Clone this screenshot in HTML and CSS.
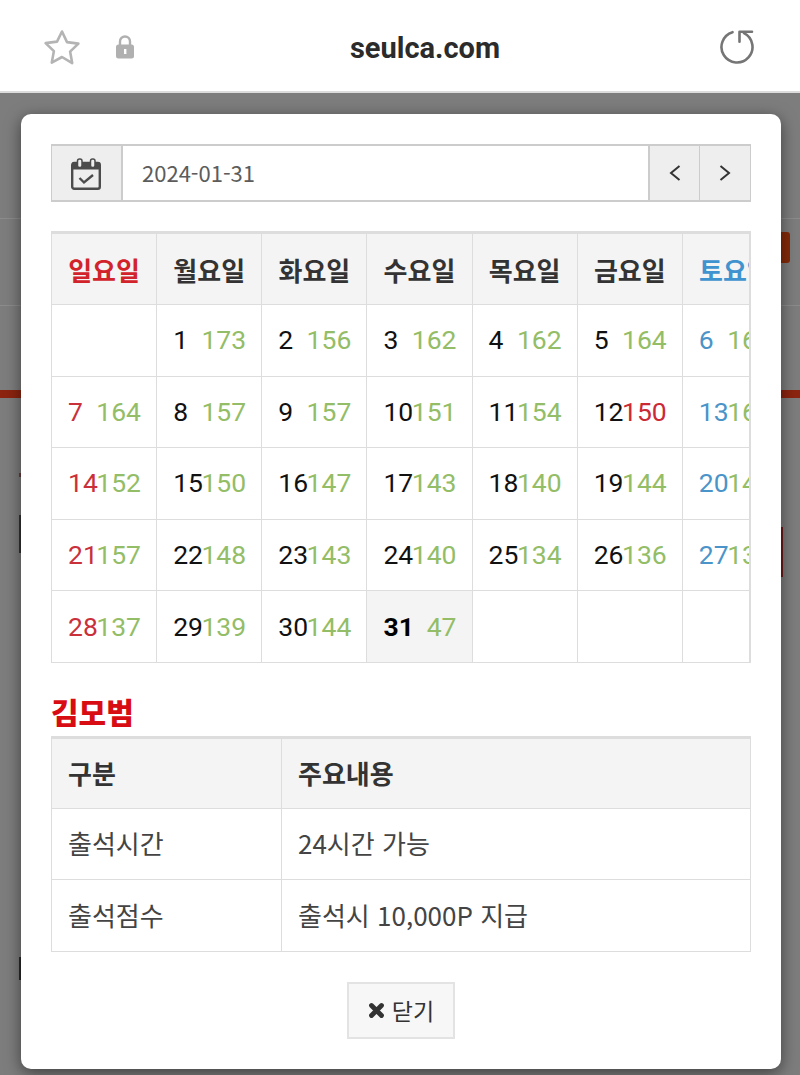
FILE: index.html
```html
<!DOCTYPE html>
<html lang="ko">
<head>
<meta charset="utf-8">
<title>seulca.com</title>
<link rel="stylesheet" href="styles.css">
</head>
<body>
<header class="browser-bar">
  <div class="bar-left">
    <svg class="star" viewBox="0 0 40 40" width="40" height="40"><path d="M20 3.500l5 10.600 11.400 1.500-8.300 8 2.100 11.500L20 29l-10.200 5.600 2.100-11.500-8.300-8 11.400-1.500z" fill="none" stroke="#b4b4b4" stroke-width="2.600" stroke-linejoin="round"/></svg>
    <svg class="lock" viewBox="0 0 20 24" width="20" height="24"><path d="M5 10V6.500a5 5 0 0 1 10 0V10" fill="none" stroke="#b0b0b0" stroke-width="2.400"/><rect x="1" y="9.500" width="18" height="14" rx="2.500" fill="#b0b0b0"/><rect x="9" y="14" width="2.400" height="5" fill="#fff"/></svg>
  </div>
  <div class="bar-title">seulca.com</div>
  <svg class="reload" viewBox="0 0 36 36" width="36" height="36"><path d="M13.500 3.200A15.500 15.500 0 1 0 25 4.200M20.500 12.700V2.700H33" fill="none" stroke="#757575" stroke-width="2.600" stroke-linecap="round" stroke-linejoin="round"/></svg>
</header>
<div class="backdrop">
  <div class="under under-line l1"></div>
  <div class="under under-line l2"></div>
  <div class="under under-band"></div>
  <div class="under under-btn"></div>
  <div class="under under-dot"></div>
  <div class="under under-left"></div>
  <div class="under under-left-2"></div>
  <div class="under under-right"></div>
  <main class="modal">
    <div class="date-group">
      <div class="addon cal-addon">
        <svg viewBox="0 0 30 32" width="30" height="32"><rect x="1.200" y="5" width="27.600" height="25.800" rx="2" fill="none" stroke="#4c4c4c" stroke-width="2.400"/><path d="M1 4.500h28v7H1z" fill="#4c4c4c"/><rect x="6.500" y="1" width="4.500" height="8.500" rx="2" fill="#eee" stroke="#4c4c4c" stroke-width="1.500"/><rect x="19.500" y="1" width="4.500" height="8.500" rx="2" fill="#eee" stroke="#4c4c4c" stroke-width="1.500"/><path d="M8.500 20l4.500 4.500 9-7.500" fill="none" stroke="#4c4c4c" stroke-width="2.400"/></svg>
      </div>
      <div class="date-input">2024-01-31</div>
      <div class="addon nav-addon prev"><svg viewBox="0 0 14 20" width="14" height="20"><path d="M11.500 3L3 10l8.500 7" fill="none" stroke="#333" stroke-width="2"/></svg></div>
      <div class="addon nav-addon next"><svg viewBox="0 0 14 20" width="14" height="20"><path d="M2.500 3L11 10l-8.500 7" fill="none" stroke="#333" stroke-width="2"/></svg></div>
    </div>
    <div class="cal-wrap">
      <table class="cal">
        <thead>
          <tr><th class="sun">일요일</th><th>월요일</th><th>화요일</th><th>수요일</th><th>목요일</th><th>금요일</th><th class="sat">토요일</th></tr>
        </thead>
        <tbody>
          <tr>
            <td></td>
            <td><div class="day"><span>1</span><b>173</b></div></td>
            <td><div class="day"><span>2</span><b>156</b></div></td>
            <td><div class="day"><span>3</span><b>162</b></div></td>
            <td><div class="day"><span>4</span><b>162</b></div></td>
            <td><div class="day"><span>5</span><b>164</b></div></td>
            <td><div class="day blue"><span>6</span><b>164</b></div></td>
          </tr>
          <tr>
            <td><div class="day red"><span>7</span><b>164</b></div></td>
            <td><div class="day"><span>8</span><b>157</b></div></td>
            <td><div class="day"><span>9</span><b>157</b></div></td>
            <td><div class="day"><span>10</span><b>151</b></div></td>
            <td><div class="day"><span>11</span><b>154</b></div></td>
            <td><div class="day"><span>12</span><b class="low">150</b></div></td>
            <td><div class="day blue"><span>13</span><b>164</b></div></td>
          </tr>
          <tr>
            <td><div class="day red"><span>14</span><b>152</b></div></td>
            <td><div class="day"><span>15</span><b>150</b></div></td>
            <td><div class="day"><span>16</span><b>147</b></div></td>
            <td><div class="day"><span>17</span><b>143</b></div></td>
            <td><div class="day"><span>18</span><b>140</b></div></td>
            <td><div class="day"><span>19</span><b>144</b></div></td>
            <td><div class="day blue"><span>20</span><b>145</b></div></td>
          </tr>
          <tr>
            <td><div class="day red"><span>21</span><b>157</b></div></td>
            <td><div class="day"><span>22</span><b>148</b></div></td>
            <td><div class="day"><span>23</span><b>143</b></div></td>
            <td><div class="day"><span>24</span><b>140</b></div></td>
            <td><div class="day"><span>25</span><b>134</b></div></td>
            <td><div class="day"><span>26</span><b>136</b></div></td>
            <td><div class="day blue"><span>27</span><b>136</b></div></td>
          </tr>
          <tr>
            <td><div class="day red"><span>28</span><b>137</b></div></td>
            <td><div class="day"><span>29</span><b>139</b></div></td>
            <td><div class="day"><span>30</span><b>144</b></div></td>
            <td class="today"><div class="day"><span>31</span><b>47</b></div></td>
            <td></td>
            <td></td>
            <td></td>
          </tr>
        </tbody>
      </table>
    </div>
    <h2 class="name">김모범</h2>
    <table class="info">
      <thead>
        <tr><th class="c1">구분</th><th>주요내용</th></tr>
      </thead>
      <tbody>
        <tr><td>출석시간</td><td>24시간 가능</td></tr>
        <tr><td>출석점수</td><td>출석시 10,000P 지급</td></tr>
      </tbody>
    </table>
    <div class="actions">
      <button class="close" type="button"><svg viewBox="0 0 17 17" width="17" height="17"><path d="M3.500 3.500l10 10M13.500 3.500l-10 10" stroke="#333" stroke-width="4.800" stroke-linecap="round"/></svg>닫기</button>
    </div>
  </main>
</div>
</body>
</html>
```
FILE: styles.css
```css
* { box-sizing: border-box; }
html, body { margin: 0; padding: 0; }
body {
  width: 800px;
  height: 1075px;
  overflow: hidden;
  background: #7d7d7d;
  font-family: "Noto Sans CJK KR", "Noto Sans", sans-serif;
  color: #333;
}
.browser-bar {
  height: 93px;
  background: #fff;
  border-bottom: 2px solid #dcdcdc;
  display: flex;
  align-items: center;
  justify-content: space-between;
  padding: 0 45px 0 42px;
  position: relative;
}
.bar-left { display: flex; align-items: center; gap: 32px; }
.star { display: block; margin-top: 4px; }
.lock { display: block; margin-top: 2px; margin-left: 1px; }
.bar-title {
  position: absolute;
  left: 50px;
  right: 0;
  top: 29px;
  text-align: center;
  font: 700 29px/38px Roboto, sans-serif;
  color: #2b2b2b;
}
.reload { display: block; margin-top: 3px; }
.backdrop {
  position: relative;
  height: 982px;
  padding: 21px 19px 6px 21px;
  background: #7d7d7d;
}
.under { position: absolute; }
.under-line { left: 0; right: 0; height: 1px; background: #8c8c8c; }
.l1 { top: 125px; }
.l2 { top: 212px; }
.under-band { left: 0; right: 0; top: 297px; height: 8px; background: #8c2410; }
.under-btn { left: 770px; top: 139px; width: 20px; height: 31px; background: #842a08; border-radius: 3px; }
.under-dot { left: 19px; top: 380px; width: 2px; height: 4px; background: #6b3a3a; }
.under-left { left: 19px; top: 422px; width: 2px; height: 38px; background: #333; }
.under-left-2 { left: 19px; top: 864px; width: 2px; height: 23px; background: #2a2a2a; }
.under-right { left: 781px; top: 434px; width: 2px; height: 50px; background: #6b1a1a; }
.modal {
  position: relative;
  width: 760px;
  height: 955px;
  background: #fff;
  border-radius: 10px;
  padding: 30px 30px 0;
  box-shadow: 0 4px 16px rgba(0, 0, 0, .5);
}
.date-group {
  display: flex;
  height: 58px;
  border: 1px solid #ccc;
  border-width: 2px 1px;
  background: #fff;
}
.addon {
  background: #eee;
  display: flex;
  align-items: center;
  justify-content: center;
  flex: none;
}
.cal-addon { width: 71px; border-right: 2px solid #ccc; padding: 2px 2px 0 0; }
.date-input {
  flex: 1;
  padding-left: 19px;
  font-size: 22px;
  line-height: 52px;
  color: #5c5c5c;
}
.nav-addon { width: 51px; border-left: 1px solid #ccc; }
.nav-addon.prev { border-left-width: 2px; }
.cal-wrap {
  margin-top: 29px;
  width: 700px;
  overflow: hidden;
  border-top: 3px solid #ddd;
  border-bottom: 1px solid #ddd;
  border-right: 2px solid #ddd;
}
.cal {
  border-collapse: collapse;
  table-layout: fixed;
  width: 737px;
}
.cal th, .cal td {
  border: 1px solid #ddd;
  padding: 0 16px;
}
.cal tr:first-child th { border-top: 0; }
.cal tbody tr:last-child td { border-bottom: 0; }
.cal th {
  height: 70.5px;
  background: #f4f4f4;
  font-size: 26px;
  font-weight: 700;
  color: #333;
  text-align: center;
  white-space: nowrap;
  padding: 0;
  overflow: hidden;
}
.cal td { height: 71.5px; }
.cal .sun { color: #d2232a; }
.cal .sat { color: #3f93cf; }
.day {
  display: flex;
  font: 400 26.5px/36px Roboto, sans-serif;
  color: #111;
  width: 73px;
}
.day span { flex: 0 0 0; width: 0; min-width: 0; white-space: nowrap; }
.day b { margin-left: auto; font-weight: 400; color: #93bd66; }
.day b.low { color: #cb2a35; }
.day.red span { color: #c9303a; }
.day.blue span { color: #4a94c9; }
.today { background: #f4f4f4; }
.today span { font-weight: 700; color: #000; }
.name {
  margin: 29px 0 5.5px;
  font-size: 30px;
  line-height: 38px;
  font-weight: 900;
  color: #d80d13;
}
.info {
  width: 700px;
  border-collapse: collapse;
  table-layout: fixed;
  border-top: 3px solid #ddd;
}
.info th, .info td {
  border: 1px solid #ddd;
  padding: 0 16px 2px;
  text-align: left;
  font-size: 26px;
  height: 71.5px;
  color: #444;
}
.info tr:first-child th { border-top: 0; }
.info th {
  height: 71px;
  background: #f4f4f4;
  font-weight: 700;
  color: #333;
}
.info .c1 { width: 230px; }
.actions { display: flex; justify-content: center; margin-top: 30px; }
.close {
  width: 108px;
  height: 57px;
  display: flex;
  align-items: center;
  justify-content: center;
  gap: 7px;
  background: #f7f7f7;
  border: 2px solid #e3e3e3;
  font: 400 23px/30px "Noto Sans CJK KR", sans-serif;
  color: #333;
  padding: 0;
}
```
